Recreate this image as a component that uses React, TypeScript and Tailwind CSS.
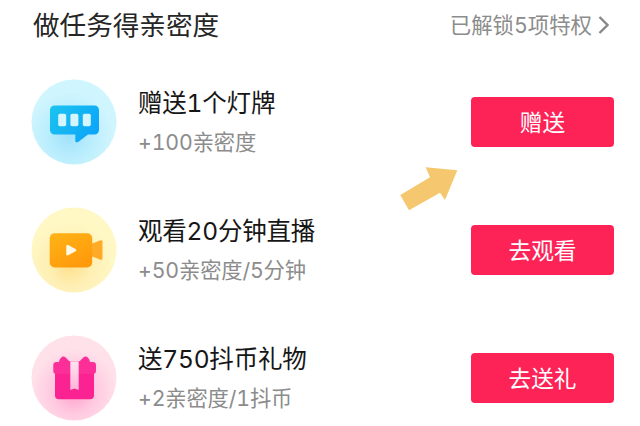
import React from "react";

function BadgeIcon() {
  return (
    <svg className="h-[86px] w-[86px]" viewBox="0 0 86 86" fill="none">
      <defs>
        <radialGradient id="badgeBg" cx="0.45" cy="0.66" r="0.5">
          <stop offset="0" stopColor="#9fe1fb" />
          <stop offset="0.5" stopColor="#b9edfd" />
          <stop offset="1" stopColor="#cff5fe" />
        </radialGradient>
        <linearGradient id="badgeFg" x1="0" y1="0" x2="1" y2="0.6">
          <stop offset="0" stopColor="#1cc4ef" />
          <stop offset="1" stopColor="#0ca6f8" />
        </linearGradient>
      </defs>
      <circle cx="43" cy="43" r="42.5" fill="url(#badgeBg)" />
      <path
        d="M23.5 26.5h40a4.5 4.5 0 0 1 4.5 4.5v20a4.5 4.5 0 0 1-4.5 4.5H57l-9.5 7.2c-1.4 1-3.2.8-3.2-.9v-6.3H23.5a4.5 4.5 0 0 1-4.5-4.5V31a4.5 4.5 0 0 1 4.5-4.5z"
        fill="url(#badgeFg)"
      />
      <rect x="27.2" y="34.8" width="8" height="12.4" rx="1.8" fill="#d5f6ff" />
      <rect x="39.4" y="34.8" width="8" height="12.4" rx="1.8" fill="#d5f6ff" />
      <rect x="51.8" y="34.8" width="8" height="12.4" rx="1.8" fill="#d5f6ff" />
    </svg>
  );
}

function VideoIcon() {
  return (
    <svg className="h-[86px] w-[86px]" viewBox="0 0 86 86" fill="none">
      <defs>
        <radialGradient id="videoBg" cx="0.45" cy="0.68" r="0.5">
          <stop offset="0" stopColor="#fee08c" />
          <stop offset="0.5" stopColor="#feefb4" />
          <stop offset="1" stopColor="#fff7c4" />
        </radialGradient>
        <linearGradient id="videoFg" x1="0" y1="0" x2="0.6" y2="1">
          <stop offset="0" stopColor="#ffb416" />
          <stop offset="1" stopColor="#ff9a0c" />
        </linearGradient>
      </defs>
      <circle cx="43" cy="43" r="42.5" fill="url(#videoBg)" />
      <path d="M60 37l9.5-3.7c1-.4 2 .2 2 1.2v17c0 1-1 1.6-2 1.2L60 49z" fill="#ffab27" />
      <rect x="18.7" y="26.2" width="42.5" height="34.3" rx="5" fill="url(#videoFg)" />
      <path
        d="M36.5 39v8.2l7.5-4.1z"
        fill="#fffbe6"
        stroke="#fffbe6"
        strokeWidth="2.5"
        strokeLinejoin="round"
      />
    </svg>
  );
}

function GiftIcon() {
  return (
    <svg className="h-[86px] w-[86px]" viewBox="0 0 86 86" fill="none">
      <defs>
        <radialGradient id="giftBg" cx="0.5" cy="0.66" r="0.5">
          <stop offset="0" stopColor="#ff9fcb" />
          <stop offset="0.5" stopColor="#ffc8df" />
          <stop offset="1" stopColor="#ffe1ea" />
        </radialGradient>
        <linearGradient id="giftRibbon" x1="0" y1="0" x2="0" y2="1">
          <stop offset="0" stopColor="#ffe3ef" />
          <stop offset="1" stopColor="#ffb3d6" />
        </linearGradient>
      </defs>
      <circle cx="43" cy="43" r="42.5" fill="url(#giftBg)" />
      <path d="M24 37h39v23.2a4 4 0 0 1-4 4H28a4 4 0 0 1-4-4z" fill="#fb2391" />
      <path
        d="M25.5 27H28c.4-3 2.4-5.5 4.5-5.5 2.5 0 3.5 3.5 7 5.1h8c3.5-1.6 4.5-5.1 7-5.1 2.1 0 4.1 2.5 4.5 5.5h2.8a3.2 3.2 0 0 1 3.2 3.2v5.6a3.2 3.2 0 0 1-3.2 3.2H25.5a3.2 3.2 0 0 1-3.2-3.2v-5.6a3.2 3.2 0 0 1 3.2-3.2z"
        fill="#fc2f98"
      />
      <path d="M39.3 26.5h8.4V55l-4.2-1.5-4.2 1.5z" fill="url(#giftRibbon)" />
    </svg>
  );
}

const tasks = [
  { title: "赠送1个灯牌", reward: "+100亲密度", action: "赠送", icon: <BadgeIcon /> },
  { title: "观看20分钟直播", reward: "+50亲密度/5分钟", action: "去观看", icon: <VideoIcon /> },
  { title: "送750抖币礼物", reward: "+2亲密度/1抖币", action: "去送礼", icon: <GiftIcon /> },
];

export default function App() {
  return (
    <main className="relative h-[426px] w-[640px] overflow-hidden bg-white font-[Inter,'Noto_Sans_CJK_SC',sans-serif] whitespace-nowrap tabular-nums">
      <header className="flex h-[58px] items-start justify-between pt-[5px] pr-[31px] pl-[33px]">
        <h1 className="text-[26.6px] leading-[40px] text-[#262626]">做任务得亲密度</h1>
        <button className="flex h-10 items-center text-[21.4px] leading-[40px] text-[#8c8c8c]">
          已解锁5项特权
          <svg className="ml-1.5 h-[18px] w-[11px]" viewBox="0 0 11 18" fill="none" stroke="#888888" strokeWidth="2.4">
            <path d="M1.5 1l8 8-8 8" />
          </svg>
        </button>
      </header>

      <ul>
        {tasks.map((task) => (
          <li key={task.title} className="flex h-32 items-center pr-[26px] pb-px pl-[31px]">
            {task.icon}
            <div className="ml-[21px] flex-1">
              <h2 className="text-[24.5px] leading-[40px] tracking-[-0.2px] text-[#161616]">{task.title}</h2>
              <p className="text-[21.3px] leading-[38px] tracking-[-0.15px] text-[#8c8c8c]">{task.reward}</p>
            </div>
            <button className="mt-px h-[50px] w-[143px] rounded-[4px] bg-[#fe2357] pt-0.5 text-[22.7px] text-white">
              {task.action}
            </button>
          </li>
        ))}
      </ul>

      {/* Pointer over the first action */}
      <svg className="absolute top-[160px] left-[395px] h-[56px] w-[68px]" viewBox="395 160 68 56">
        <path d="M400.3 195l29.7-17.7-4.3-10 31.6 3-12.3 29.7-5-7.3-31 17.6z" fill="#f5c86f" />
      </svg>
    </main>
  );
}
